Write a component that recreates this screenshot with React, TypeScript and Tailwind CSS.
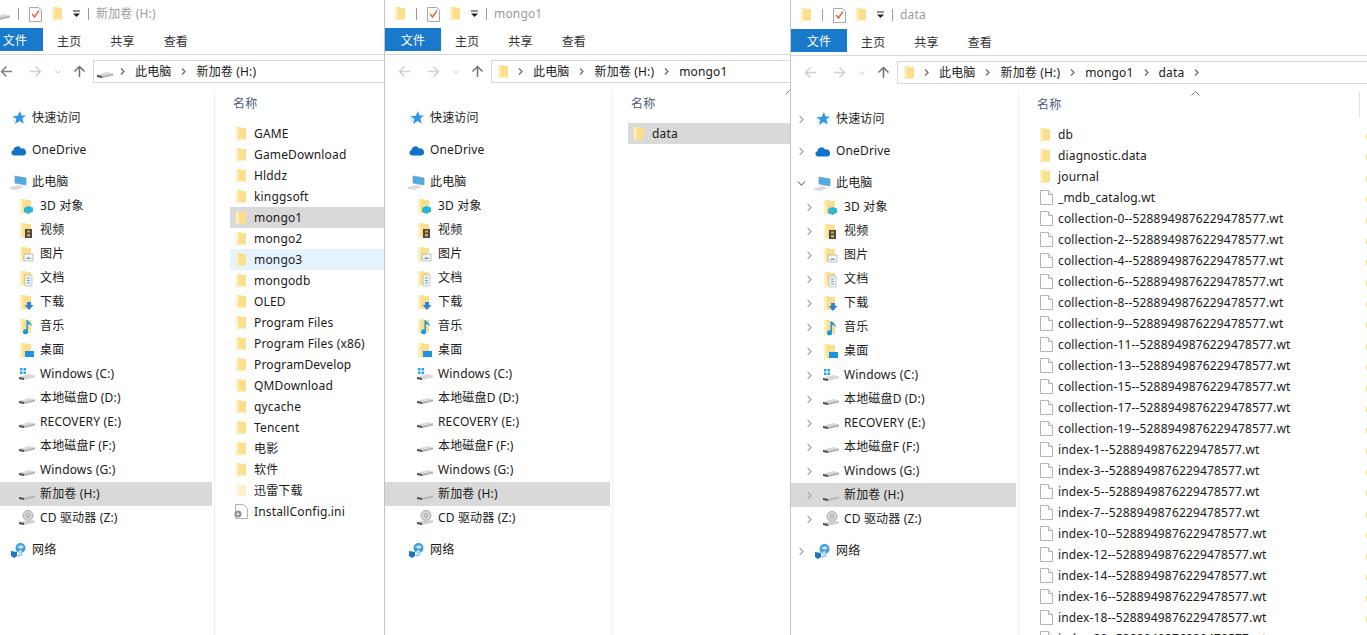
import { ReactNode } from "react";
import { ChevronDown, ChevronRight } from "lucide-react";

const font = "[font-family:'Noto_Sans','Noto_Sans_CJK_SC',sans-serif] tracking-[0.16px]";

const Folder = ({ pale }: { pale?: boolean }) => (
  <svg width="10" height="14" viewBox="0 0 10 14" className="shrink-0">
    <path d="M0 0h4.500l1 1H10v11.500H2L0 14z" fill={pale ? "#fdf0cc" : "#fbdf8c"} />
    <path d="M0 0h2.500v12L0 14z" fill={pale ? "#fef7e3" : "#fff0bd"} />
  </svg>
);

const FileIcon = () => (
  <svg width="13" height="15" viewBox="0 0 13 15" className="shrink-0">
    <path d="M.5.5h8l4 4v10H.5z" fill="#fff" stroke="#b4b4b4" />
    <path d="M8.500.5v4h4" fill="#f2f2f2" stroke="#b4b4b4" />
  </svg>
);

const IniIcon = () => (
  <svg width="15" height="15" viewBox="0 0 15 15" className="shrink-0">
    <path d="M2.500.5h8l4 4v10h-12z" fill="#fff" stroke="#b4b4b4" />
    <circle cx="5" cy="10" r="3.600" fill="#8f949a" />
    <circle cx="5" cy="10" r="1.300" fill="#e8e8e8" />
  </svg>
);

const Drive = () => (
  <svg width="16" height="16" viewBox="0 0 16 16">
    <path d="M0 11l10-3 6 1.500v2L5 14l-5-1z" fill="#d9d9d9" />
    <path d="M0 11l5 1v2l-5-1z" fill="#4e4e4e" />
    <path d="M5 12l11-2.500v2L5 14z" fill="#b5b5b5" />
  </svg>
);

const WinDrive = () => (
  <svg width="16" height="16" viewBox="0 0 16 16">
    <path d="M0 11l10-3 6 1.500v2L5 14l-5-1z" fill="#d9d9d9" />
    <path d="M0 11l5 1v2l-5-1z" fill="#4e4e4e" />
    <path d="M1 2h2.500v2.500H1zM4.500 2H7v2.500H4.500zM1 5.500h2.500V8H1zM4.500 5.500H7V8H4.500z" fill="#1ea7ea" />
  </svg>
);

const CdDrive = () => (
  <svg width="16" height="16" viewBox="0 0 16 16">
    <circle cx="9" cy="5.500" r="5" fill="#d4d4d4" stroke="#a8a8a8" />
    <circle cx="9" cy="5.500" r="1.500" fill="#fff" stroke="#8c8c8c" />
    <path d="M0 12l10-2 6 .5v2L5 15l-5-1z" fill="#d0d0d0" />
    <path d="M0 12l5 1v2l-5-1z" fill="#4e4e4e" />
  </svg>
);

const Star = () => (
  <svg width="14" height="14" viewBox="0 0 14 14">
    <path d="M8 0l1.500 4.500H14l-3.600 3 1.300 5L7.500 10 3 13l1.300-5L.5 5h5z" fill="#2f97e6" />
    <path d="M0 7h3M1 10h2" stroke="#a9d6f5" />
  </svg>
);

const Cloud = () => (
  <svg width="15" height="11" viewBox="0 0 15 11">
    <path d="M3 10.500a2.800 2.800 0 0 1-.5-5.500A4 4 0 0 1 10 3.500a3.600 3.600 0 0 1 2.500 7z" fill="#0f73c9" />
  </svg>
);

const Pc = () => (
  <svg width="17" height="15" viewBox="0 0 17 15">
    <path d="M5 1l11 2v7l-11-2z" fill="#4aaee8" stroke="#8794a0" strokeWidth=".7" />
    <path d="M0 12l9-2 5 2-7 3-7-1z" fill="#dcdcdc" />
  </svg>
);

const Network = () => (
  <svg width="15" height="15" viewBox="0 0 15 15">
    <circle cx="9.500" cy="5" r="5" fill="#3f9ddf" />
    <path d="M6 4l4-2 3 2-3 2zM7 8l3-1 1 2-2 1z" fill="#c7e5f8" />
    <path d="M0 8l6 1v4l-3 2-3-2z" fill="#1b76c4" />
    <path d="M6 12l5-2 1 2-5 2z" fill="#9ecdf0" />
  </svg>
);

const Special = ({ kind }: { kind: string }) => {
  return (
    <svg width="14" height="17" viewBox="0 0 14 17">
      <path d="M0 1h5l1 1h5v13H2l-2 2z" fill="#fbdf8c" />
      <path d="M0 1h2.500v13.500L0 17z" fill="#fff0bd" />
      {kind === "3d" && <path d="M8 8l5 1.500v4L8.500 16 4 14v-4z" fill="#29b6d8" />}
      {kind === "video" && (
        <>
          <path d="M5 7h7v9H5z" fill="#4a4a4a" />
          <path d="M7 8.500h3v2H7zM7 12h3v2.500H7z" fill="#d9a441" />
        </>
      )}
      {kind === "pic" && (
        <>
          <path d="M4 8h9v7H4z" fill="#f4f4f4" stroke="#a0a0a0" strokeWidth=".6" />
          <path d="M5.500 13l3-2 3 2z" fill="#6c9ccb" />
        </>
      )}
      {kind === "doc" && (
        <>
          <path d="M5 5h7v11H5z" fill="#f5f5f5" stroke="#a8a8a8" strokeWidth=".6" />
          <path d="M7 8h3M7 10.500h3M7 13h3" stroke="#5ba1d8" />
        </>
      )}
      {kind === "down" && <path d="M7 8h4v3h2.500L9 16l-4.500-5H7z" fill="#2b85d6" />}
      {kind === "music" && <path d="M8 4v9.500a2.500 2.500 0 1 1-1.500-2V2l1.500.5c1 2 4 3 4.500 6-1-1.500-3-2.500-4.500-2.500z" fill="#159ae8" />}
      {kind === "desk" && <path d="M5 9h9v6H5z" fill="#1893e6" />}
    </svg>
  );
};

const NavRow = ({ icon, label, sub, selected, chevron, top }: { icon: ReactNode, label: string, sub?: boolean, selected?: boolean, chevron?: "right" | "down", top?: boolean }) => {
  return (
    <div className={`flex h-[24px] w-[225px] items-center ${top ? "mt-[8px]" : ""} ${selected ? "bg-[#d9d9d9]" : ""}`}>
      <div className={`flex items-center justify-center ${sub ? "w-[29px] pl-[8px]" : "w-[21px]"}`}>
        {chevron === "right" && <ChevronRight size={13} strokeWidth={2} className="text-[#a6a6a6]" />}
        {chevron === "down" && <ChevronDown size={13} strokeWidth={2} className="text-[#7d7d7d]" />}
      </div>
      <div className={`flex shrink-0 items-center justify-center ${sub ? "w-[24px] pr-[2px]" : "w-[24px] pr-[3px]"}`}>{icon}</div>
      <span className="-mt-px text-[12px] leading-none text-[#1a1a1a]">{label}</span>
    </div>
  );
};

const Nav = ({ chevrons }: { chevrons?: boolean }) => {
  const right = chevrons ? "right" : undefined;
  const folders = [
    { label: "3D 对象", kind: "3d" },
    { label: "视频", kind: "video" },
    { label: "图片", kind: "pic" },
    { label: "文档", kind: "doc" },
    { label: "下载", kind: "down" },
    { label: "音乐", kind: "music" },
    { label: "桌面", kind: "desk" },
  ];
  const drives = [
    { label: "Windows (C:)", icon: <WinDrive /> },
    { label: "本地磁盘D (D:)", icon: <Drive /> },
    { label: "RECOVERY (E:)", icon: <Drive /> },
    { label: "本地磁盘F (F:)", icon: <Drive /> },
    { label: "Windows (G:)", icon: <Drive /> },
    { label: "新加卷 (H:)", icon: <Drive />, selected: true },
    { label: "CD 驱动器 (Z:)", icon: <CdDrive /> },
  ];
  return (
    <div className="w-[227px] shrink-0 pt-[16px]">
      <NavRow icon={<Star />} label="快速访问" chevron={right} />
      <NavRow icon={<Cloud />} label="OneDrive" chevron={right} top />
      <NavRow icon={<Pc />} label="此电脑" chevron={chevrons ? "down" : undefined} top />
      {folders.map((item) => (
        <NavRow key={item.label} sub icon={<Special kind={item.kind} />} label={item.label} chevron={right} />
      ))}
      {drives.map((item) => (
        <NavRow key={item.label} sub icon={item.icon} label={item.label} selected={item.selected} chevron={right} />
      ))}
      <NavRow icon={<Network />} label="网络" chevron={right} top />
    </div>
  );
};

type Entry = { name: string, type?: "file" | "ini" | "pale", state?: "selected" | "hover" };

const FileRow = ({ entry, sliver }: { entry: Entry, sliver?: boolean }) => {
  return (
    <div className={`relative flex h-[21px] items-center pl-[6px] ${entry.state === "selected" ? "bg-[#d9d9d9]" : ""} ${entry.state === "hover" ? "bg-[#e5f3ff]" : ""}`}>
      <div className="flex w-[18px] shrink-0 items-center">
        {entry.type === "file" ? <FileIcon /> : entry.type === "ini" ? <div className="-ml-[3px]"><IniIcon /></div> : <Folder pale={entry.type === "pale"} />}
      </div>
      <span className="whitespace-nowrap text-[12px] leading-none text-[#1a1a1a]">{entry.name}</span>
      {sliver && <div className="absolute right-0 top-[10px] h-[5px] w-px bg-[#fbdf8c]" />}
    </div>
  );
};

const FileList = ({ entries, caret, sliver }: { entries: Entry[], caret?: boolean, sliver?: boolean }) => {
  return (
    <div className="min-w-0 flex-1 border-l border-[#f0f0f0] pl-[15px] pt-[2px]">
      <div className="relative flex h-[24px] items-center pl-[3px] text-[12px] leading-none text-[#4c607a]">
        名称
        {caret && <svg width="9" height="5" viewBox="0 0 9 5" className="absolute left-[157px] top-[-2px]"><path d="M.5 4.500l4-4 4 4" fill="none" stroke="#7a7a7a" /></svg>}
        {sliver && <div className="absolute right-[7px] top-[-1px] h-[26px] w-px bg-[#e2e2e2]" />}
      </div>
      <div className="pt-[7px]">
        {entries.map((entry) => <FileRow key={entry.name} entry={entry} sliver={sliver} />)}
      </div>
    </div>
  );
};

const QatDropdown = () => (
  <svg width="9" height="8" viewBox="0 0 9 8">
    <path d="M1 1h7" stroke="#222" />
    <path d="M1 3.500h7L4.500 7z" fill="#222" />
  </svg>
);

const TaskIcon = () => (
  <svg width="13" height="16" viewBox="0 0 13 16">
    <path d="M.5 1.500h9l3 3v11H.5z" fill="#fff" stroke="#a8a8a8" />
    <path d="M3 8l2.500 3L10 4.500" fill="none" stroke="#e8623a" strokeWidth="1.400" />
  </svg>
);

const Arrow = ({ dir, color }: { dir: "left" | "right" | "up", color: string }) => {
  const d = dir === "left" ? "M12 6.500H1.500M6.500 1.500l-5 5 5 5" : dir === "right" ? "M1 6.500h10.500M6.500 1.500l5 5-5 5" : "M6.500 12V1.500M1.500 6.500l5-5 5 5";
  return <svg width="13" height="13" viewBox="0 0 13 13"><path d={d} fill="none" stroke={color} strokeWidth="1.500" /></svg>;
};

const CrumbChevron = () => (
  <svg width="5" height="7" viewBox="0 0 5 7" className="mx-[6px] shrink-0"><path d="M1 .5l3 3-3 3" fill="none" stroke="#6e6e6e" strokeWidth="1.300" /></svg>
);

const Crumb = ({ label }: { label: string }) => (
  <>
    <CrumbChevron />
    <span className="mx-[4px] whitespace-nowrap text-[12px] leading-none text-[#1a1a1a]">{label}</span>
  </>
);

const Explorer = ({ title, firstIcon, addressIcon, crumbs, trailing, backColor, children }: { title: string, firstIcon: ReactNode, addressIcon: ReactNode, crumbs: string[], trailing?: boolean, backColor: string, children: ReactNode }) => {
  return (
    <>
      <div className="relative flex h-[28px] items-center">
        <div className="flex w-[31px] justify-end pr-[11px]">{firstIcon}</div>
        <div className="h-[12px] w-px bg-[#9a9a9a]" />
        <div className="ml-[10px] w-[23px]"><TaskIcon /></div>
        <div className="w-[16px]"><Folder /></div>
        <div className="ml-[1px] flex w-[14px] justify-center"><QatDropdown /></div>
        <div className="ml-[5px] h-[12px] w-px bg-[#9a9a9a]" />
        <span className="ml-[7px] text-[12px] leading-none text-[#9b9b9b]">{title}</span>
      </div>
      <div className="flex h-[27px] items-start border-b border-[#dadada]">
        <div className="flex h-[23px] w-[56px] items-center justify-center bg-[#1979ca] pt-[2px] text-[12px] leading-none text-white">文件</div>
        <span className="ml-[14px] mt-[8px] text-[12px] leading-none text-[#333]">主页</span>
        <span className="ml-[29px] mt-[8px] text-[12px] leading-none text-[#333]">共享</span>
        <span className="ml-[29px] mt-[8px] text-[12px] leading-none text-[#333]">查看</span>
      </div>
      <div className="flex h-[35px] items-start pt-[5px]">
        <div className="flex h-[23px] w-[106px] shrink-0 items-center">
          <div className="ml-[13px] w-[29px]"><Arrow dir="left" color={backColor} /></div>
          <div className="w-[24px]"><Arrow dir="right" color="#d0d0d0" /></div>
          <ChevronDown size={10} strokeWidth={2} className="mr-[10px] text-[#bdbdbd]" />
          <Arrow dir="up" color="#707070" />
        </div>
        <div className="flex h-[23px] min-w-0 flex-1 items-center border border-r-0 border-[#d9d9d9] pl-[2px]">
          <div className="flex w-[18px] justify-center">{addressIcon}</div>
          {crumbs.map((crumb) => <Crumb key={crumb} label={crumb} />)}
          {trailing && <CrumbChevron />}
        </div>
      </div>
      <div className="flex h-[560px]">{children}</div>
    </>
  );
};

const hId = "5288949876229478577";

const driveEntries: Entry[] = [
  { name: "GAME" },
  { name: "GameDownload" },
  { name: "Hlddz" },
  { name: "kinggsoft" },
  { name: "mongo1", state: "selected" },
  { name: "mongo2" },
  { name: "mongo3", state: "hover" },
  { name: "mongodb" },
  { name: "OLED" },
  { name: "Program Files" },
  { name: "Program Files (x86)" },
  { name: "ProgramDevelop" },
  { name: "QMDownload" },
  { name: "qycache" },
  { name: "Tencent" },
  { name: "电影" },
  { name: "软件" },
  { name: "迅雷下载", type: "pale" },
  { name: "InstallConfig.ini", type: "ini" },
];

const dataEntries: Entry[] = [
  { name: "db" },
  { name: "diagnostic.data" },
  { name: "journal" },
  { name: "_mdb_catalog.wt", type: "file" },
  ...["0", "2", "4", "6", "8", "9", "11", "13", "15", "17", "19"].map((n): Entry => ({ name: `collection-${n}--${hId}.wt`, type: "file" })),
  ...["1", "3", "5", "7", "10", "12", "14", "16", "18", "20"].map((n): Entry => ({ name: `index-${n}--${hId}.wt`, type: "file" })),
];

export default function App() {
  return (
    <div className={`flex h-[635px] w-[1367px] overflow-hidden bg-white ${font}`}>
      <div className="w-[385px] shrink-0 overflow-hidden border-r border-[#c4c4c4]">
        <div className="-ml-[13px]">
          <Explorer title="新加卷 (H:)" firstIcon={<div className="-mr-[3px]"><Drive /></div>} addressIcon={<Drive />} crumbs={["此电脑", "新加卷 (H:)"]} backColor="#808080">
            <Nav />
            <FileList entries={driveEntries} />
          </Explorer>
        </div>
      </div>
      <div className="w-[406px] shrink-0 overflow-hidden border-r border-[#c4c4c4]">
        <Explorer title="mongo1" firstIcon={<Folder />} addressIcon={<Folder />} crumbs={["此电脑", "新加卷 (H:)", "mongo1"]} backColor="#d0d0d0">
          <Nav />
          <FileList entries={[{ name: "data", state: "selected" }]} caret />
        </Explorer>
      </div>
      <div className="min-w-0 flex-1 overflow-hidden pt-px">
        <Explorer title="data" firstIcon={<Folder />} addressIcon={<Folder />} crumbs={["此电脑", "新加卷 (H:)", "mongo1", "data"]} trailing backColor="#d0d0d0">
          <Nav chevrons />
          <FileList entries={dataEntries} caret sliver />
        </Explorer>
      </div>
    </div>
  );
}
